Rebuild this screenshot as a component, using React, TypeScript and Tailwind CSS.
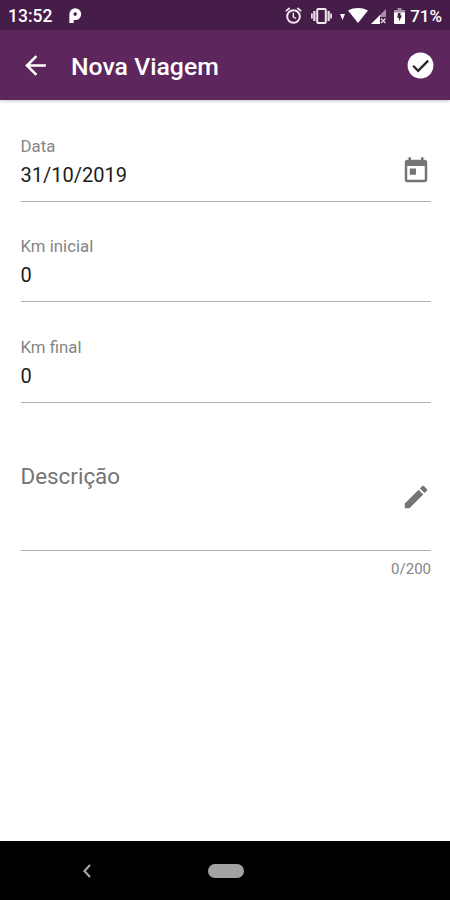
import type { ReactNode } from 'react';
import { MdArrowBack, MdEdit, MdToday } from 'react-icons/md';

type Field = {
  label: string;
  value: string;
  icon?: ReactNode;
};

const fields: Field[] = [
  { label: "Data", value: "31/10/2019", icon: <MdToday className="text-[30px] text-[#757575]" /> },
  { label: "Km inicial", value: "0" },
  { label: "Km final", value: "0" }
];

function StatusBar() {
  return (
    <div className="flex h-[30px] items-center bg-[#461c48] pl-2 pr-2 text-[17px] font-medium text-white">
      <span className="mt-[3px] w-[60px] text-[17.5px] leading-none">13:52</span>
      <svg className="mt-px h-[15px] w-3.5" viewBox="0 0 14 16">
        <path fillRule="evenodd" fill="#fff" d="M1 6.500a6.300 6.300 0 1 1 7 6.300L5.600 12.700V16H1zM7.200 4.600a1.900 1.900 0 1 0 0 3.800a1.900 1.900 0 0 0 0-3.800z" />
      </svg>

      <div className="ml-auto flex items-center">
        <svg className="mr-[9px] mt-px size-[17px]" viewBox="0 0 17 17" fill="none" stroke="#f0e9f0">
          <circle cx="8.500" cy="9.500" r="6.300" strokeWidth="2" />
          <path strokeWidth="1.700" d="M.8 4.200L4.700 1M16.200 4.200L12.300 1" />
          <path strokeWidth="1.400" d="M8.300 5.800V9.800L11 11.500" />
        </svg>
        <svg className="mr-2 mt-0.5 h-4 w-[21px]" viewBox="0 0 21 16">
          <rect x="6.200" y="1" width="8.600" height="14" rx="1" fill="none" stroke="#f0e9f0" strokeWidth="2" />
          <path fill="#e6dbe6" d="M2.200 3h2.300v10H2.200zM16.500 3h2.300v10h-2.300zM0 5.500h1.800v5H0zM19.200 5.500H21v5h-1.800z" />
        </svg>
        <svg className="mr-[3px] mt-1 h-1.5 w-[5px]" viewBox="0 0 5 6">
          <path fill="#fff" d="M0 0h5L2.5 6z" />
        </svg>
        <svg className="mr-[3px] mt-px h-[15px] w-5" viewBox="0 0 20 15">
          <path fill="#fff" d="M10 15L0 2.600C3 .7 6.500 0 10 0s7 .7 10 2.600z" />
        </svg>
        {/* Mobile signal, no data */}
        <svg className="mr-2 mt-0.5 h-[15px] w-[15px]" viewBox="0 0 15 15">
          <path fill="#a58ea6" d="M15 0v8H8V7z" />
          <path fill="#fff" d="M0 15L9 6v9z" />
          <path stroke="#e3d8e3" strokeWidth="1.300" d="M10 9.500l4.500 4.500M14.500 9.500L10 14" />
        </svg>
        <svg className="mr-[5px] mt-0.5 h-4 w-[11px]" viewBox="0 0 11 16">
          <path fill="#a58ea6" d="M3.500 0h4v2H11v3H0V2h3.500z" />
          <path fill="#fff" d="M0 4.500h11V15a1 1 0 0 1-1 1H1a1 1 0 0 1-1-1z" />
          <path fill="#461c48" d="M4 5h2.500v2.500H8L5 13.500V10H3.300z" />
        </svg>
        <span className="mt-[3px] leading-none">71%</span>
      </div>
    </div>
  );
}

function AppBar() {
  return (
    <header className="flex h-[70px] items-center bg-[#5d275e] pl-5 pr-3.5 text-white shadow-[0_1px_3px_rgba(0,0,0,0.25)]">
      <MdArrowBack className="text-[31px]" />
      <h1 className="ml-5 mt-1 text-[24.800px] font-medium leading-none">Nova Viagem</h1>
      <svg className="ml-auto size-[31px]" viewBox="0 0 24 24">
        <circle cx="12" cy="12" r="10" fill="#fff" />
        <path fill="none" stroke="#2c222d" strokeWidth="1.800" d="M6.300 12.200l3.900 3.900l7.700-7.900" />
      </svg>
    </header>
  );
}

export default function App() {
  return (
    <div className="flex h-[900px] w-[450px] flex-col bg-white font-[Roboto,sans-serif]">
      <StatusBar />
      <AppBar />

      <main className="flex-1 pl-[20.500px] pr-[19px] pt-[1px]">
        {fields.map((field) => (
          <div key={field.label} className="flex h-[100.500px] items-end justify-between border-b-[1.5px] border-[#b0b0b0]">
            <div className="pb-3.5">
              <div className="text-[16.800px] leading-5 text-[#858585]">{field.label}</div>
              <div className="mt-[7px] text-[20px] leading-6 text-[#1c1c1c]">{field.value}</div>
            </div>
            {field.icon && <div className="pb-[15px]">{field.icon}</div>}
          </div>
        ))}

        <div className="flex h-[148px] items-start justify-between border-b-[1.5px] border-[#b0b0b0]">
          <span className="pt-[61px] text-[22.400px] leading-6 text-[#757575]">Descrição</span>
          <MdEdit className="mt-[79px] text-[30px] text-[#757575]" />
        </div>
        <div className="mt-2 text-right text-[15px] leading-5 text-[#858585]">0/200</div>
      </main>

      {/* Navigation bar */}
      <nav className="flex h-[59px] items-center bg-black pl-[83px]">
        <svg className="h-3.5 w-2" viewBox="0 0 8 14">
          <path fill="none" stroke="#a5a5a5" strokeWidth="2.200" d="M7 1L1.500 7L7 13" />
        </svg>
        <div className="ml-[117px] h-3.5 w-9 rounded-full bg-[#a3a3a3]" />
      </nav>
    </div>
  );
}
